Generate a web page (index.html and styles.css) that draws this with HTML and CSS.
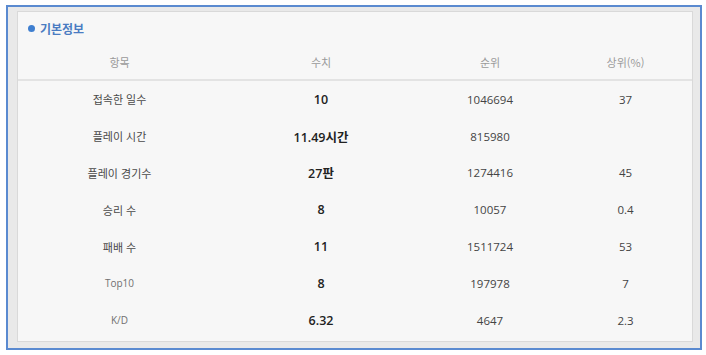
FILE: index.html
```html
<!DOCTYPE html>
<html lang="ko">
<head>
<meta charset="utf-8">
<link rel="stylesheet" href="styles.css">
</head>
<body>
<div class="frame">
  <div class="panel">
    <div class="title"><span class="dot"></span>기본정보</div>
    <div class="table">
      <div class="row head">
        <div>항목</div><div>수치</div><div>순위</div><div>상위(%)</div>
      </div>
      <div class="row"><div class="label">접속한 일수</div><div class="val">10</div><div class="num">1046694</div><div class="num">37</div></div>
      <div class="row"><div class="label">플레이 시간</div><div class="val">11.49시간</div><div class="num">815980</div><div class="num"></div></div>
      <div class="row"><div class="label">플레이 경기수</div><div class="val">27판</div><div class="num">1274416</div><div class="num">45</div></div>
      <div class="row"><div class="label">승리 수</div><div class="val">8</div><div class="num">10057</div><div class="num">0.4</div></div>
      <div class="row"><div class="label">패배 수</div><div class="val">11</div><div class="num">1511724</div><div class="num">53</div></div>
      <div class="row"><div class="label lat">Top10</div><div class="val">8</div><div class="num">197978</div><div class="num">7</div></div>
      <div class="row"><div class="label lat">K/D</div><div class="val">6.32</div><div class="num">4647</div><div class="num">2.3</div></div>
    </div>
  </div>
</div>
</body>
</html>
```

FILE: styles.css
```css
html, body {
  margin: 0;
  padding: 0;
  background: #ffffff;
}
body {
  padding: 5px 4px 5px 6px;
  font-family: "Noto Sans CJK KR", sans-serif;
}
.frame {
  width: 676px;
  height: 331px;
  border: 2px solid #5a8ad0;
  background: #e9e9e9;
  padding: 4px 7px 6px 9px;
  box-sizing: content-box;
  display: flex;
}
.panel {
  flex: 1;
  border: 1px solid #d9d9d9;
  background: #f7f7f7;
  display: flex;
  flex-direction: column;
}
.title {
  height: 33px;
  display: flex;
  align-items: center;
  padding-left: 10px;
  color: #4a7cc2;
  font-weight: bold;
  font-size: 12px;
}
.dot {
  width: 7px;
  height: 7px;
  border-radius: 50%;
  background: #3f7fd0;
  margin-right: 5px;
}
.row {
  display: grid;
  grid-template-columns: 203px 200px 138px 1fr;
  height: 36.8px;
  align-items: center;
  text-align: center;
  font-size: 11px;
  color: #444;
}
.row.head {
  height: 34px;
  color: #9a9a9a;
  border-bottom: 2px solid #e3e3e3;
}
.label {
  color: #4a4a4a;
}
.label.lat {
  font-family: "Open Sans", sans-serif;
  font-size: 10px;
  color: #707070;
}
.val {
  font-family: "Open Sans", "Noto Sans CJK KR", sans-serif;
  font-weight: 600;
  font-size: 12.5px;
  color: #222;
}
.num {
  font-family: "Open Sans", sans-serif;
  font-size: 11.5px;
  color: #444;
}
```
